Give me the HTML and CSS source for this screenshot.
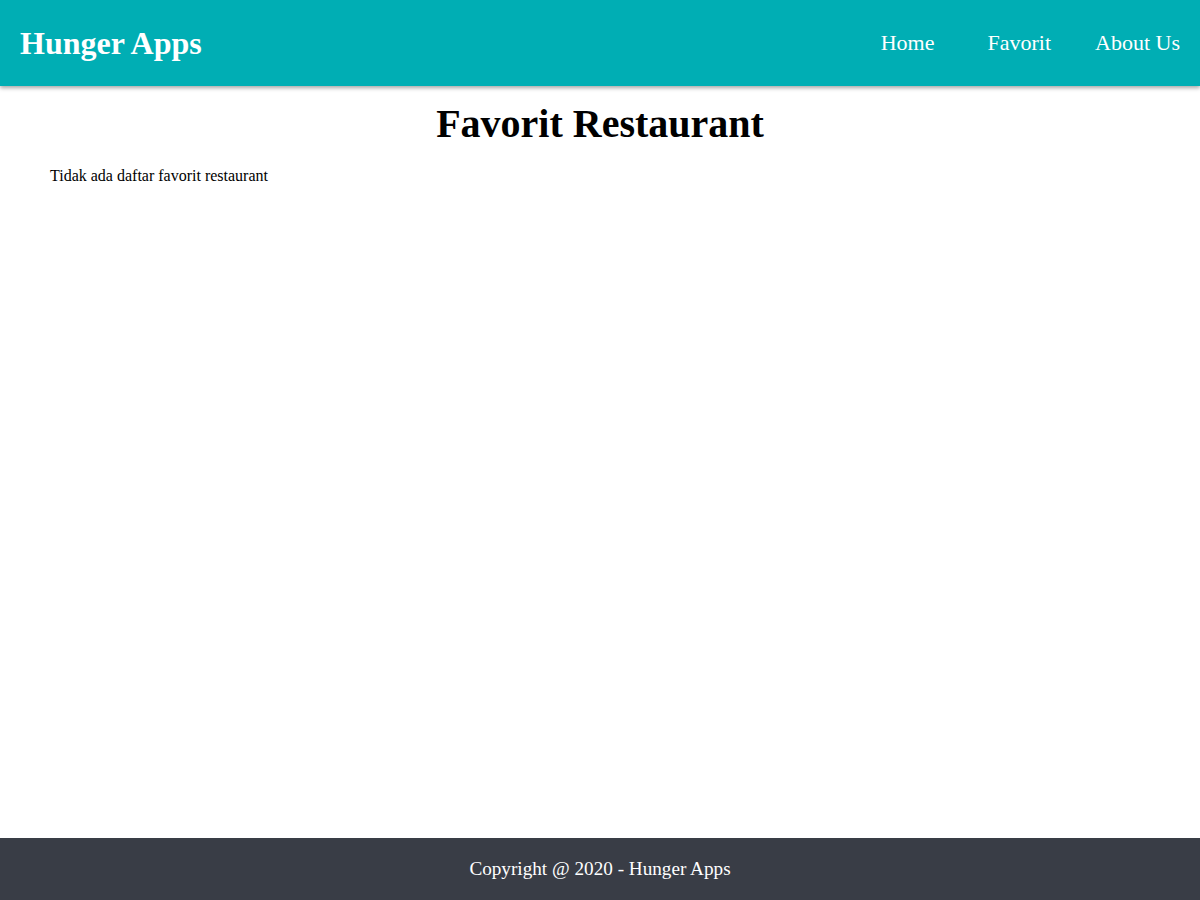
FILE: index.html
```html
<!DOCTYPE html>
<html lang="id">
<head>
<meta charset="utf-8">
<title>Hunger Apps</title>
<link rel="stylesheet" href="styles.css">
</head>
<body>
<header class="app-bar">
  <h1 class="brand">Hunger Apps</h1>
  <nav class="nav">
    <a class="nav-link nav-home" href="#">Home</a>
    <a class="nav-link nav-fav" href="#">Favorit</a>
    <a class="nav-link" href="#">About Us</a>
  </nav>
</header>
<main class="content">
  <h2 class="page-title">Favorit Restaurant</h2>
  <p class="empty">Tidak ada daftar favorit restaurant</p>
</main>
<footer class="footer">Copyright @ 2020 - Hunger Apps</footer>
</body>
</html>
```

FILE: styles.css
```css
* { box-sizing: border-box; }
html, body { margin: 0; padding: 0; }
body {
  font-family: "Liberation Serif", "Times New Roman", serif;
  color: #000;
  background: #fff;
  min-height: 100vh;
  display: flex;
  flex-direction: column;
}
.app-bar {
  height: 86px;
  background: #00aeb4;
  display: flex;
  align-items: center;
  justify-content: space-between;
  padding: 0 20px;
  box-shadow: 0 2px 4px rgba(0,0,0,0.35);
  position: relative;
  z-index: 1;
}
.brand {
  margin: 0;
  font-size: 32px;
  font-weight: bold;
  color: #fff;
}
.nav {
  display: flex;
  align-items: center;
}
.nav-link {
  color: #fff;
  text-decoration: none;
  font-size: 22px;
}
.nav-home { margin-right: 53px; }
.nav-fav { margin-right: 44px; }
.content {
  flex: 1;
  padding: 0 50px;
}
.page-title {
  margin: 14px 0 0;
  text-align: center;
  font-size: 40px;
  font-weight: bold;
}
.empty {
  margin: 20px 0 0;
  font-size: 16px;
}
.footer {
  height: 62px;
  background: #393d46;
  color: #fff;
  font-size: 19.2px;
  display: flex;
  align-items: center;
  justify-content: center;
}
```
